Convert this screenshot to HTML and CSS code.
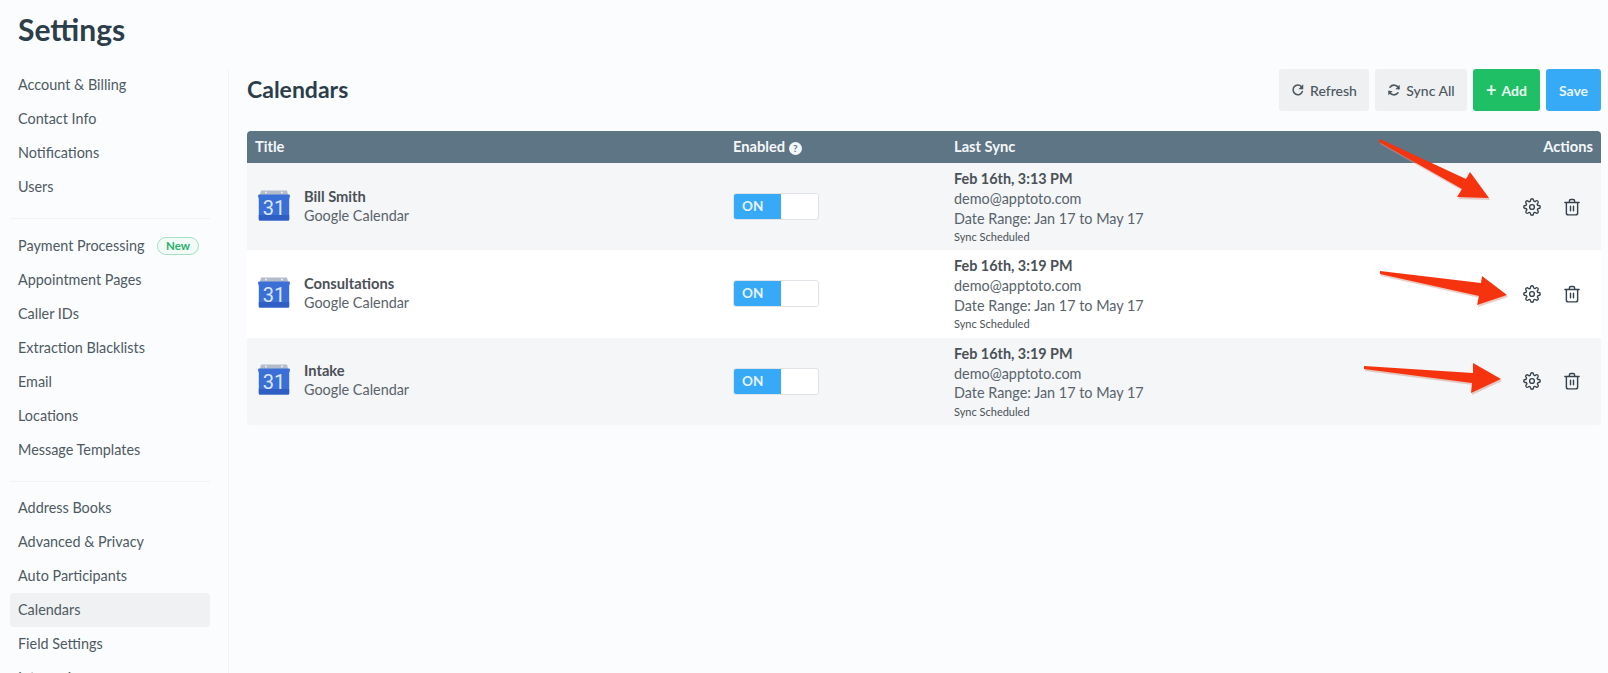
FILE: index.html
```html
<!DOCTYPE html>
<html lang="en">
<head>
<meta charset="utf-8">
<title>Settings</title>
<link rel="stylesheet" href="styles.css">
</head>
<body>
<svg width="0" height="0" class="defs">
  <defs>
    <symbol id="gear" viewBox="0 0 24 24"><circle cx="12" cy="12" r="3.2" fill="none" stroke="currentColor" stroke-width="1.800"/><path fill="none" stroke="currentColor" stroke-width="1.800" stroke-linecap="round" stroke-linejoin="round" d="M19.4 15a1.65 1.65 0 0 0 .33 1.82l.06.06a2 2 0 1 1-2.83 2.83l-.06-.06a1.65 1.65 0 0 0-2.82 1.17V21a2 2 0 1 1-4 0v-.09a1.65 1.65 0 0 0-2.82-1.12l-.06.06a2 2 0 1 1-2.83-2.83l.06-.06A1.65 1.65 0 0 0 3.09 14H3a2 2 0 1 1 0-4h.09a1.65 1.65 0 0 0 1.12-2.82l-.06-.06a2 2 0 1 1 2.83-2.83l.06.06A1.65 1.65 0 0 0 10 3.09V3a2 2 0 1 1 4 0v.09a1.65 1.65 0 0 0 2.82 1.12l.06-.06a2 2 0 1 1 2.83 2.83l-.06.06A1.65 1.65 0 0 0 20.91 10H21a2 2 0 1 1 0 4h-.09a1.65 1.65 0 0 0-1.51 1z"/></symbol>
    <symbol id="trash" viewBox="0 0 24 24"><path fill="none" stroke="currentColor" stroke-width="1.900" stroke-linecap="round" stroke-linejoin="round" d="M2.500 6h19M8.500 6V4a2 2 0 0 1 2-2h3a2 2 0 0 1 2 2v2M4.500 6v14a2.500 2.500 0 0 0 2.500 2.500h10a2.500 2.500 0 0 0 2.500-2.500V6M10 11v6M14 11v6"/></symbol>
    <symbol id="cal" viewBox="0 0 32 32">
      <path d="M3 1.500h26l1.500 6H1.500z" fill="#b4bccb"/>
      <circle cx="8" cy="3.500" r="1" fill="#eef1f6"/><circle cx="24" cy="3.500" r="1" fill="#eef1f6"/>
      <path d="M0 7c0-1 .5-1.500 1.500-1.500h29c1 0 1.500.5 1.500 1.500l-.8 3v20c0 1-.5 1.500-1.200 1.500H2c-.7 0-1.200-.5-1.200-1.500V10z" fill="#3b6fd8"/>
      <path d="M.8 26h30.400v4c0 1-.5 1.500-1.200 1.500H2c-.7 0-1.200-.5-1.200-1.500z" fill="#2f5fc4"/>
    </symbol>
    <symbol id="sync" viewBox="0 0 16 16"><path fill="none" stroke="currentColor" stroke-width="1.800" stroke-linecap="round" d="M13.500 6.500A5.700 5.700 0 0 0 3.400 4.800M2.500 9.500a5.700 5.700 0 0 0 10.100 1.700"/><path fill="currentColor" d="M14.500 2v5h-5zM1.500 14V9h5z"/></symbol>
    <symbol id="refresh" viewBox="0 0 16 16"><path fill="none" stroke="currentColor" stroke-width="1.800" stroke-linecap="round" d="M13 9.800A5.500 5.500 0 1 1 12 4.200"/><path fill="currentColor" d="M14 1.500v5.500h-5.500z"/></symbol>
  </defs>
</svg>
<h1 class="page-title">Settings</h1>
<div class="layout">
  <nav class="sidebar">
    <ul class="nav-group">
      <li class="nav-item">Account &amp; Billing</li>
      <li class="nav-item">Contact Info</li>
      <li class="nav-item">Notifications</li>
      <li class="nav-item">Users</li>
    </ul>
    <ul class="nav-group">
      <li class="nav-item">Payment Processing <span class="badge">New</span></li>
      <li class="nav-item">Appointment Pages</li>
      <li class="nav-item">Caller IDs</li>
      <li class="nav-item">Extraction Blacklists</li>
      <li class="nav-item">Email</li>
      <li class="nav-item">Locations</li>
      <li class="nav-item">Message Templates</li>
    </ul>
    <ul class="nav-group">
      <li class="nav-item">Address Books</li>
      <li class="nav-item">Advanced &amp; Privacy</li>
      <li class="nav-item">Auto Participants</li>
      <li class="nav-item active">Calendars</li>
      <li class="nav-item">Field Settings</li>
      <li class="nav-item">Integrations</li>
    </ul>
  </nav>
  <main class="main">
    <header class="main-head">
      <h2 class="main-title">Calendars</h2>
      <div class="toolbar">
        <button class="btn btn-gray btn-refresh"><svg class="btn-icon"><use href="#refresh"/></svg>Refresh</button>
        <button class="btn btn-gray btn-sync"><svg class="btn-icon"><use href="#sync"/></svg>Sync All</button>
        <button class="btn btn-green"><span class="plus">+</span>Add</button>
        <button class="btn btn-blue">Save</button>
      </div>
    </header>
    <section class="table">
      <div class="row head">
        <div>Title</div>
        <div class="enabled-head">Enabled <span class="help">?</span></div>
        <div>Last Sync</div>
        <div class="right">Actions</div>
      </div>
      <div class="row body">
        <div class="title-cell">
          <span class="cal"><svg class="cal-svg"><use href="#cal"/></svg><span class="cal-num">31</span></span>
          <div><div class="name">Bill Smith</div><div class="sub">Google Calendar</div></div>
        </div>
        <div><div class="toggle"><span class="toggle-on">ON</span><span class="toggle-off"></span></div></div>
        <div class="sync"><div class="sync-date">Feb 16th, 3:13 PM</div><div>demo@apptoto.com</div><div>Date Range: Jan 17 to May 17</div><div class="sync-note">Sync Scheduled</div></div>
        <div class="actions"><svg class="action-icon"><use href="#gear"/></svg><svg class="action-icon"><use href="#trash"/></svg></div>
      </div>
      <div class="row body">
        <div class="title-cell">
          <span class="cal"><svg class="cal-svg"><use href="#cal"/></svg><span class="cal-num">31</span></span>
          <div><div class="name">Consultations</div><div class="sub">Google Calendar</div></div>
        </div>
        <div><div class="toggle"><span class="toggle-on">ON</span><span class="toggle-off"></span></div></div>
        <div class="sync"><div class="sync-date">Feb 16th, 3:19 PM</div><div>demo@apptoto.com</div><div>Date Range: Jan 17 to May 17</div><div class="sync-note">Sync Scheduled</div></div>
        <div class="actions"><svg class="action-icon"><use href="#gear"/></svg><svg class="action-icon"><use href="#trash"/></svg></div>
      </div>
      <div class="row body">
        <div class="title-cell">
          <span class="cal"><svg class="cal-svg"><use href="#cal"/></svg><span class="cal-num">31</span></span>
          <div><div class="name">Intake</div><div class="sub">Google Calendar</div></div>
        </div>
        <div><div class="toggle"><span class="toggle-on">ON</span><span class="toggle-off"></span></div></div>
        <div class="sync"><div class="sync-date">Feb 16th, 3:19 PM</div><div>demo@apptoto.com</div><div>Date Range: Jan 17 to May 17</div><div class="sync-note">Sync Scheduled</div></div>
        <div class="actions"><svg class="action-icon"><use href="#gear"/></svg><svg class="action-icon"><use href="#trash"/></svg></div>
      </div>
    </section>
  </main>
</div>
<svg class="arrows" viewBox="0 0 1608 673" aria-hidden="true">
  <g class="arrow-shadow">
    <path d="M1380 139 L1466 179 L1470 172 L1489 198 L1457 197 L1462 189 L1379 142Z"/>
    <path d="M1380 271 L1481 283 L1482 276 L1507 295 L1477 305 L1479 296 L1380 274Z"/>
    <path d="M1364 366 L1473 373 L1473 363 L1501 379 L1471 393 L1472 383 L1364 369Z"/>
  </g>
  <g class="arrow-fill">
    <path d="M1380 139 L1466 179 L1470 172 L1489 198 L1457 197 L1462 189 L1379 142Z"/>
    <path d="M1380 271 L1481 283 L1482 276 L1507 295 L1477 305 L1479 296 L1380 274Z"/>
    <path d="M1364 366 L1473 373 L1473 363 L1501 379 L1471 393 L1472 383 L1364 369Z"/>
  </g>
</svg>
</body>
</html>
```
FILE: styles.css
```css
* { box-sizing: border-box; }
html, body { height: 100%; overflow: hidden; }
body {
  margin: 0;
  background: #fbfcfe;
  color: #47525a;
  font-family: "Lato", "Noto Sans", sans-serif;
  font-size: 14.400px;
  position: relative;
}
.defs { position: absolute; }
.page-title {
  margin: 0;
  padding: 10px 0 0 18px;
  height: 69px;
  font-size: 30px;
  line-height: 38px;
  font-weight: 700;
  color: #2c3e4a;
}
.layout { display: flex; align-items: flex-start; }
.sidebar {
  width: 229px;
  height: 640px;
  padding: 0 18px 0 10px;
  border-right: 1px solid #f0f2f4;
}
.nav-group {
  list-style: none;
  margin: 0 0 10px;
  padding: 0 0 14px;
  border-bottom: 1px solid #f1f2f4;
}
.nav-group:first-child { margin-top: -1px; }
.nav-group:last-child { border-bottom: 0; margin-top: -1px; }
.nav-item {
  height: 34px;
  line-height: 33px;
  padding-left: 8px;
  border-radius: 4px;
  white-space: nowrap;
  color: #4e5a62;
}
.nav-item.active { background: #eff1f3; }
.badge {
  display: inline-block;
  margin-left: 9px;
  padding: 0 8px;
  height: 18px;
  line-height: 16px;
  border: 1px solid #a5dfc0;
  border-radius: 9px;
  background: #f3fbf7;
  color: #27b06c;
  font-size: 11.500px;
  font-weight: 700;
  vertical-align: 1px;
}
.main { flex: 1; padding: 0 7px 0 18px; }
.main-head {
  display: flex;
  align-items: center;
  justify-content: space-between;
  height: 42px;
  margin-bottom: 20px;
}
.main-title {
  margin: 0 0 3px;
  font-size: 23px;
  font-weight: 700;
  color: #2c3e4a;
}
.toolbar { display: flex; gap: 6px; }
.btn {
  height: 42px;
  border: 0;
  border-radius: 3px;
  font: 500 14px "Lato", sans-serif;
  display: flex;
  align-items: center;
  justify-content: center;
  gap: 5px;
  padding: 0;
}
.btn-gray { background: #eef0f2; color: #4b565e; }
.btn-refresh { width: 90px; }
.btn-sync { width: 92px; }
.btn-green { width: 67px; background: #1fbf66; color: #e9fbf1; font-weight: 700; }
.btn-blue { width: 55px; background: #36a9f7; color: #e6f5ff; font-weight: 700; }
.btn-icon { width: 14px; height: 14px; }
.plus { font-size: 18px; line-height: 18px; }
.table { border-radius: 4px; overflow: hidden; }
.row {
  display: grid;
  grid-template-columns: 478px 221px 1fr 160px;
  padding: 0 8px;
}
.row.head {
  height: 32px;
  align-items: center;
  padding-bottom: 3px;
  background: #5d7585;
  color: #f4f7f9;
  font-weight: 700;
  font-size: 14.700px;
}
.help {
  display: inline-block;
  width: 13px;
  height: 13px;
  border-radius: 50%;
  background: #f4f7f9;
  color: #5d7585;
  font-size: 10px;
  line-height: 13px;
  text-align: center;
  vertical-align: 0;
}
.right { text-align: right; }
.row.body {
  height: 87.300px;
  align-items: center;
  background: #f4f6f8;
}
.row.body:nth-child(odd) { background: #ffffff; }
.title-cell { display: flex; align-items: center; gap: 14px; padding: 0 0 2px 3px; }
.cal { position: relative; width: 32px; height: 32px; display: block; margin-bottom: 2px; }
.cal-svg { width: 32px; height: 32px; display: block; }
.cal-num {
  position: absolute;
  left: 0;
  right: 0;
  top: 8px;
  text-align: center;
  font: 20px/22px "Roboto", sans-serif;
  color: #dbe7fb;
}
.name { font-weight: 700; font-size: 14.700px; line-height: 20px; color: #4a5157; }
.sub { line-height: 20px; color: #59636b; }
.toggle {
  display: flex;
  width: 86px;
  height: 27px;
  border-radius: 3px;
  overflow: hidden;
  border: 1px solid #dfe3e7;
}
.toggle-on {
  width: 48px;
  margin: -1px 0 -1px -1px;
  background: #36a9f7;
  color: #e6f5ff;
  font-weight: 700;
  font-size: 13.500px;
  line-height: 27px;
  padding-left: 9px;
}
.toggle-off { flex: 1; background: #fff; }
.sync { line-height: 19.500px; color: #59636b; }
.sync-date { font-weight: 700; color: #4a5157; line-height: 21px; }
.sync-note { font-size: 11px; line-height: 17px; color: #4a5157; }
.actions { display: flex; justify-content: flex-end; gap: 22px; padding-right: 12px; color: #36424b; }
.action-icon { width: 18px; height: 18px; }
.arrows {
  position: absolute;
  left: 0;
  top: 0;
  width: 1608px;
  height: 673px;
  pointer-events: none;
}
.arrow-shadow { fill: #d89a8e; opacity: .5; transform: translate(1px, 2px); }
.arrow-fill { fill: #f5330f; }
```
